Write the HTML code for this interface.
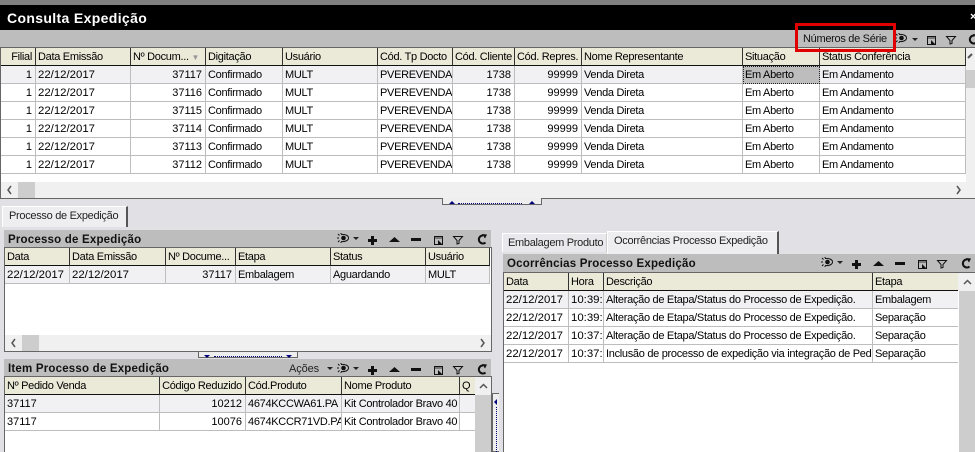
<!DOCTYPE html>
<html lang="pt"><head><meta charset="utf-8"><title>Consulta Expedição</title>
<style>
html,body{margin:0;padding:0;width:975px;height:452px;overflow:hidden}
#w{position:absolute;left:0;top:0;width:975px;height:452px;overflow:hidden;background:#e1e1e5;font:11px "Liberation Sans",Arial,sans-serif;color:#111}
.a{position:absolute}
table{position:absolute;border-collapse:separate;border-spacing:0;table-layout:fixed;background:#fff}
td,th{height:15px;padding:2px 3px 0 2px;border-right:1px solid #bdbdbd;border-bottom:1px solid #bdbdbd;overflow:hidden;white-space:nowrap;font:11px/15px "Liberation Sans",Arial,sans-serif;letter-spacing:-.3px;text-align:left;box-sizing:content-box;color:#000}
th{background:#ebe9d8;border-right:1px solid #333;border-bottom:1px solid #111;font-weight:normal}
td.r,th.r{text-align:right}
td.n{letter-spacing:0}
td.d{letter-spacing:0;font-size:11.4px}
tr.f td{background:#f1f1f3}
.bar{position:absolute;background:#bdbdbd}
.t{position:absolute;font:bold 11.5px/17px "Liberation Sans",Arial,sans-serif;color:#111;white-space:nowrap;letter-spacing:.2px}
.sb{position:absolute;background:#f0f0f0}
.th{position:absolute;background:#cdcdcd}
.fr{position:absolute;border:1px solid #666;box-sizing:border-box;background:#fff}
.tab{position:absolute;background:#eeeef1;border:1px solid #fff;border-right:2px solid #555;border-bottom:0;box-sizing:border-box;font:11px/18px "Liberation Sans",Arial,sans-serif;letter-spacing:-.3px;padding-left:6px;white-space:nowrap;color:#222}
svg.i{position:absolute;overflow:visible}
</style></head><body>
<svg width="0" height="0" style="position:absolute"><defs>
<g id="eye" fill="none" stroke="#111"><path d="M0 5h2M1 1l1.500 1.500M1 9l1.500-1.500M4 0v1M4 9v1" stroke-width="1"/><path d="M4 1.500C8 1 11.500 2.500 11.500 5S8 9 4 8.500" stroke-width="1"/><circle cx="6.500" cy="5" r="2.300" fill="#111" stroke="none"/></g>
<path id="dn" d="M0 0h6l-3 3z" fill="#222"/>
<path id="plus" d="M3 0h3v3h3v3H6v3H3V6H0V3h3z" fill="#111"/>
<path id="up" d="M0 5L5.500 0 11 5z" fill="#111"/>
<path id="minus" d="M0 0h10v3H0z" fill="#111"/>
<g id="box" fill="none" stroke="#111"><path d="M.5.500h8v8h-8z"/><path d="M.5 2h8" stroke="#333"/><path d="M4 4l4 4H4z" fill="#111" stroke="none"/></g>
<path id="fil" d="M.5.500h9L6 4.500v3L4 8V4.500z" fill="none" stroke="#111" stroke-width="1"/>
<g id="ref"><path d="M8.500 8.500A4 4 0 1 1 6 1.500" fill="none" stroke="#111" stroke-width="2"/><path d="M5 0l5 .5-2 4z" fill="#111"/></g>
<g id="tools"><use href="#eye" x="2" y="3"/><use href="#dn" x="18" y="7"/><use href="#plus" x="33" y="6"/><use href="#up" x="54" y="7"/><use href="#minus" x="76" y="8"/><use href="#box" x="99" y="6"/><use href="#fil" x="118" y="6"/><use href="#ref" x="142" y="4"/></g>
</defs></svg>
<div id="w">
<div class="a" style="left:0;top:0;width:975px;height:5px;background:#808080"></div>
<div class="a" style="left:0;top:5px;width:975px;height:25px;background:#000"></div>
<div class="a" style="left:7px;top:8px;color:#fff;font:bold 14px/20px 'Liberation Sans',Arial,sans-serif;letter-spacing:.35px;white-space:nowrap">Consulta Expedição</div>
<div class="a" style="left:970px;top:10px;color:#fff;font:bold 11px/14px 'Liberation Sans',sans-serif">×</div>
<div class="bar" style="left:0;top:30px;width:975px;height:17px"></div>
<div class="a" style="left:803px;top:31px;font:11px/16px 'Liberation Sans',Arial,sans-serif;color:#111;white-space:nowrap;letter-spacing:-.3px">Números de Série</div>
<svg class="i" style="left:895px;top:33px" width="12" height="12"><use href="#eye"/></svg>
<svg class="i" style="left:912px;top:38px" width="6" height="3"><use href="#dn"/></svg>
<svg class="i" style="left:927px;top:36px" width="9" height="9"><use href="#box"/></svg>
<svg class="i" style="left:946px;top:36px" width="10" height="8"><use href="#fil"/></svg>
<svg class="i" style="left:968px;top:34px" width="10" height="10"><use href="#ref"/></svg>

<!-- Main grid -->
<div class="fr" style="left:0;top:47px;width:976px;height:152px"></div>
<table style="left:1px;top:48px;width:965px">
<colgroup><col style="width:35px"><col style="width:95px"><col style="width:75px"><col style="width:77px"><col style="width:95px"><col style="width:75px"><col style="width:62px"><col style="width:67px"><col style="width:161px"><col style="width:77px"><col style="width:146px"></colgroup>
<tr><th class="r">Filial</th><th>Data Emissão</th><th>Nº Docum... <span style="color:#999;font-size:8px">▼</span></th><th>Digitação</th><th>Usuário</th><th>Cód. Tp Docto</th><th>Cód. Cliente</th><th class="r">Cód. Repres.</th><th>Nome Representante</th><th>Situação</th><th>Status Conferência</th></tr>
<tr class="f"><td class="r n">1</td><td class="d">22/12/2017</td><td class="r n">37117</td><td>Confirmado</td><td>MULT</td><td>PVEREVENDA</td><td class="r n">1738</td><td class="r n">99999</td><td>Venda Direta</td><td style="background:#bdbdbd;outline:1px dotted #222;outline-offset:-1px">Em Aberto</td><td>Em Andamento</td></tr>
<tr><td class="r n">1</td><td class="d">22/12/2017</td><td class="r n">37116</td><td>Confirmado</td><td>MULT</td><td>PVEREVENDA</td><td class="r n">1738</td><td class="r n">99999</td><td>Venda Direta</td><td>Em Aberto</td><td>Em Andamento</td></tr>
<tr><td class="r n">1</td><td class="d">22/12/2017</td><td class="r n">37115</td><td>Confirmado</td><td>MULT</td><td>PVEREVENDA</td><td class="r n">1738</td><td class="r n">99999</td><td>Venda Direta</td><td>Em Aberto</td><td>Em Andamento</td></tr>
<tr><td class="r n">1</td><td class="d">22/12/2017</td><td class="r n">37114</td><td>Confirmado</td><td>MULT</td><td>PVEREVENDA</td><td class="r n">1738</td><td class="r n">99999</td><td>Venda Direta</td><td>Em Aberto</td><td>Em Andamento</td></tr>
<tr><td class="r n">1</td><td class="d">22/12/2017</td><td class="r n">37113</td><td>Confirmado</td><td>MULT</td><td>PVEREVENDA</td><td class="r n">1738</td><td class="r n">99999</td><td>Venda Direta</td><td>Em Aberto</td><td>Em Andamento</td></tr>
<tr><td class="r n">1</td><td class="d">22/12/2017</td><td class="r n">37112</td><td>Confirmado</td><td>MULT</td><td>PVEREVENDA</td><td class="r n">1738</td><td class="r n">99999</td><td>Venda Direta</td><td>Em Aberto</td><td>Em Andamento</td></tr>
</table>
<div class="sb" style="left:966px;top:48px;width:9px;height:150px"></div>
<svg class="i" style="left:968px;top:53px" width="7" height="6"><path d="M0 5l4-4" fill="none" stroke="#555" stroke-width="2"/></svg>
<div class="th" style="left:966px;top:70px;width:9px;height:18px"></div>
<div class="sb" style="left:1px;top:182px;width:974px;height:16px"></div>
<div class="th" style="left:18px;top:182px;width:17px;height:16px"></div>
<svg class="i" style="left:7px;top:186px" width="5" height="8"><path d="M4 0L1 4l3 4" fill="none" stroke="#555" stroke-width="1.500"/></svg>
<svg class="i" style="left:956px;top:186px" width="5" height="8"><path d="M1 0l3 4-3 4" fill="none" stroke="#555" stroke-width="1.500"/></svg>
<div class="a" style="left:442px;top:198px;width:100px;height:7px;border:1px solid #666;border-top:0;box-sizing:border-box;background:#eee"></div>
<div class="a" style="left:458px;top:203px;width:64px;border-top:1px dotted #00007a"></div>
<svg class="i" style="left:449px;top:201px" width="7" height="3"><path d="M0 3l3-3 3 3z" fill="#00007a"/></svg>
<svg class="i" style="left:529px;top:201px" width="7" height="3"><path d="M0 3l3-3 3 3z" fill="#00007a"/></svg>

<!-- Left panel tab -->
<div class="tab" style="left:2px;top:206px;width:126px;height:21px">Processo de Expedição</div>

<!-- Panel 1 -->
<div class="bar" style="left:4px;top:230px;width:487px;height:17px"></div>
<div class="t" style="left:8px;top:232px">Processo de Expedição</div>
<svg class="i" style="left:335px;top:230px" width="160" height="18"><use href="#tools"/></svg>
<div class="fr" style="left:4px;top:247px;width:488px;height:105px"></div>
<table style="left:5px;top:248px;width:485px">
<colgroup><col style="width:65px"><col style="width:96px"><col style="width:70px"><col style="width:95px"><col style="width:95px"><col style="width:64px"></colgroup>
<tr><th>Data</th><th>Data Emissão</th><th>Nº Docume...</th><th>Etapa</th><th>Status</th><th>Usuário</th></tr>
<tr class="f"><td class="d">22/12/2017</td><td class="d">22/12/2017</td><td class="r n">37117</td><td>Embalagem</td><td>Aguardando</td><td>MULT</td></tr>
</table>
<div class="sb" style="left:5px;top:335px;width:486px;height:16px"></div>
<div class="th" style="left:22px;top:335px;width:17px;height:16px"></div>
<svg class="i" style="left:11px;top:339px" width="5" height="8"><path d="M4 0L1 4l3 4" fill="none" stroke="#555" stroke-width="1.500"/></svg>
<svg class="i" style="left:480px;top:339px" width="5" height="8"><path d="M1 0l3 4-3 4" fill="none" stroke="#555" stroke-width="1.500"/></svg>
<div class="a" style="left:198px;top:352px;width:100px;height:6px;border:1px solid #666;border-top:0;box-sizing:border-box;background:#eee"></div>
<div class="a" style="left:214px;top:356px;width:68px;border-top:1px dotted #00007a"></div>
<svg class="i" style="left:204px;top:355px" width="6" height="3"><path d="M0 0h6l-3 3z" fill="#00007a"/></svg>
<svg class="i" style="left:286px;top:355px" width="6" height="3"><path d="M0 0h6l-3 3z" fill="#00007a"/></svg>

<!-- Panel 2 -->
<div class="bar" style="left:4px;top:359px;width:487px;height:17px"></div>
<div class="t" style="left:8px;top:361px">Item Processo de Expedição</div>
<div class="a" style="left:289px;top:361px;font:11px/17px 'Liberation Sans',sans-serif;color:#222;letter-spacing:-.1px">Ações</div>
<svg class="i" style="left:327px;top:367px" width="6" height="3"><use href="#dn"/></svg>
<svg class="i" style="left:335px;top:360px" width="160" height="18"><use href="#tools"/></svg>
<div class="fr" style="left:4px;top:376px;width:488px;height:90px"></div>
<table style="left:5px;top:377px;width:470px">
<colgroup><col style="width:155px"><col style="width:86px"><col style="width:96px"><col style="width:118px"><col style="width:15px"></colgroup>
<tr><th>Nº Pedido Venda</th><th class="r">Código Reduzido</th><th>Cód.Produto</th><th>Nome Produto</th><th style="border-right:0;padding-right:0">Q</th></tr>
<tr class="f"><td class="n">37117</td><td class="r n">10212</td><td>4674KCCWA61.PA</td><td>Kit Controlador Bravo 40</td><td style="border-right:0"></td></tr>
<tr><td class="n">37117</td><td class="r n">10076</td><td>4674KCCR71VD.PA</td><td>Kit Controlador Bravo 40</td><td style="border-right:0"></td></tr>
</table>
<div class="sb" style="left:475px;top:377px;width:16px;height:18px"></div>
<div class="th" style="left:475px;top:395px;width:16px;height:57px"></div>
<svg class="i" style="left:479px;top:383px" width="9" height="6"><path d="M1 5l3.500-3.500L8 5" fill="none" stroke="#555" stroke-width="1.500"/></svg>

<!-- Vertical splitter -->
<div class="a" style="left:492px;top:393px;width:7px;height:59px;border:1px solid #666;border-right:0;box-sizing:border-box;background:#eee"></div>
<div class="a" style="left:496px;top:407px;height:45px;border-left:1px dotted #00007a"></div>
<svg class="i" style="left:494px;top:399px" width="4" height="6"><path d="M3 0L0 3l3 3z" fill="#00007a"/></svg>
<div class="a" style="left:499px;top:393px;width:4px;height:59px;background:#e1e1e5"></div>

<!-- Right panel -->
<div class="tab" style="left:502px;top:233px;width:105px;height:19px;border-right:1px solid #ccc;background:#e9e9ed;padding-left:5px">Embalagem Produto</div>
<div class="tab" style="left:607px;top:231px;width:172px;height:23px;padding-left:6px">Ocorrências Processo Expedição</div>
<div class="bar" style="left:503px;top:254px;width:472px;height:18px"></div>
<div class="t" style="left:507px;top:256px">Ocorrências Processo Expedição</div>
<svg class="i" style="left:819px;top:254px" width="160" height="18"><use href="#tools"/></svg>
<div class="fr" style="left:503px;top:272px;width:473px;height:181px"></div>
<table style="left:504px;top:273px;width:454px">
<colgroup><col style="width:65px"><col style="width:35px"><col style="width:269px"><col style="width:85px"></colgroup>
<tr><th>Data</th><th>Hora</th><th>Descrição</th><th style="border-right:0">Etapa</th></tr>
<tr class="f"><td class="d">22/12/2017</td><td class="d">10:39:22</td><td>Alteração de Etapa/Status do Processo de Expedição.</td><td style="border-right:0">Embalagem</td></tr>
<tr><td class="d">22/12/2017</td><td class="d">10:39:12</td><td>Alteração de Etapa/Status do Processo de Expedição.</td><td style="border-right:0">Separação</td></tr>
<tr><td class="d">22/12/2017</td><td class="d">10:37:48</td><td>Alteração de Etapa/Status do Processo de Expedição.</td><td style="border-right:0">Separação</td></tr>
<tr><td class="d">22/12/2017</td><td class="d">10:37:32</td><td>Inclusão de processo de expedição via integração de Pedido</td><td style="border-right:0">Separação</td></tr>
</table>
<div class="sb" style="left:958px;top:273px;width:17px;height:18px"></div>
<div class="th" style="left:959px;top:291px;width:16px;height:161px"></div>
<svg class="i" style="left:963px;top:279px" width="9" height="6"><path d="M1 5l3.500-3.500L8 5" fill="none" stroke="#555" stroke-width="1.500"/></svg>

<!-- Red highlight -->
<div class="a" style="left:795px;top:23px;width:101px;height:29px;border:3px solid #e00000;box-sizing:border-box"></div>
</div>
</body></html>
